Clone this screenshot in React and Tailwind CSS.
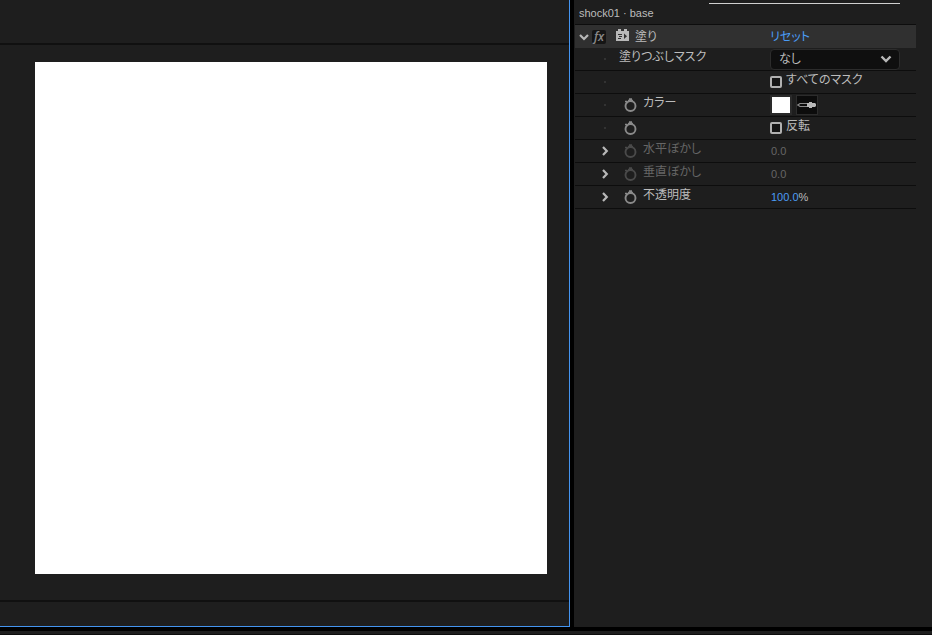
import React, { useState } from 'react';

const Twirl = () => (
  <svg width="8" height="10" viewBox="0 0 8 10" fill="none" stroke="#b8b8b8" strokeWidth="2.2">
    <path d="M2 1l3.8 4L2 9" />
  </svg>
);

const Stopwatch = ({ dim }) => (
  <svg width="13" height="14" viewBox="0 0 13 14" fill="none" stroke={dim ? '#4a4a4a' : '#8a8a8a'}>
    <circle cx="6.5" cy="8" r="5" strokeWidth="1.9" />
    <path d="M5 1h3M4 2.500h5" strokeWidth="1.6" />
    <path d="M1 3.500h2" strokeWidth="1.4" />
  </svg>
);

const PresetIcon = () => (
  <svg width="13" height="12" viewBox="0 0 13 12">
    <path fill="#b8b8b8" d="M0 2h2V0h3v2h3V0h3v2h2v10H0z" />
    <path d="M2 5.500h4M3 7.500h3M2 9.500h3" stroke="#303030" fill="none" />
    <path d="M8 4.500L11 7.200 8 10z" fill="#303030" />
  </svg>
);

const Eyedropper = () => (
  <svg width="20" height="8" viewBox="0 0 20 8">
    <path d="M11 2.500H3L.8 4 3 5.500h8" fill="#0c0c0c" stroke="#8a8a8a" strokeWidth="1.2" />
    <path d="M10 2h2V1h3v1h3l1 1v2l-1 1h-3v1h-3V6h-2z" fill="#b8b8b8" />
  </svg>
);

const CheckField = ({ id, label, checked, onChange }) => (
  <div className="flex items-center gap-1">
    <input
      id={id}
      type="checkbox"
      checked={checked}
      onChange={onChange}
      className="h-3 w-3 appearance-none rounded-xs border-2 border-[#b0b0b0] bg-[#141414] checked:bg-[#4b9cf5]"
    />
    <label htmlFor={id} className="pb-1">{label}</label>
  </div>
);

const Row = ({ name, htmlFor, open, timed, dim, children }) => (
  <div className="grid h-[23px] grid-cols-[195px_1fr] border-b border-[#0d0d0d]">
    <div className="flex items-center pl-[22px]">
      <span className="mr-1.5 flex w-4 justify-center">
        {open ? (
          <button type="button" aria-label={`${name}を展開`}><Twirl /></button>
        ) : (
          <span className="h-0.5 w-0.5 bg-[#333]" />
        )}
      </span>
      {timed && (
        <button type="button" aria-label="ストップウォッチ" className="w-6 pl-[5px]">
          <Stopwatch dim={dim} />
        </button>
      )}
      {name && (
        <label htmlFor={htmlFor} className={dim ? 'pb-1 text-[#666]' : 'pb-1'}>{name}</label>
      )}
    </div>
    <div className="flex items-center">{children}</div>
  </div>
);

const App = () => {
  const [allMasks, setAllMasks] = useState(false);
  const [invert, setInvert] = useState(false);
  const [mask, setMask] = useState('none');

  return (
    <div className="flex min-h-screen flex-col bg-black font-['Liberation_Sans','Noto_Sans_CJK_JP',sans-serif] text-xs leading-4 text-[#bcbcbc] [font-feature-settings:'palt']">
      <main className="flex flex-1 gap-1">
        <section className="flex min-w-0 flex-1 flex-col border-r border-b border-[#4494f0] bg-[#1e1e1e]">
          <div className="h-[43px]" />
          <div className="flex-1 border-y-2 border-[#101010] pt-[17px] pr-[22px] pb-[26px] pl-[35px]">
            <div className="aspect-square w-full bg-white" />
          </div>
          <div className="h-6" />
        </section>

        <aside className="w-[358px] shrink-0 bg-[#1e1e1e] pr-4 pl-px">
          <div className="mr-4 ml-[134px] h-1 border-b border-[#d0d0d0]" />
          <h1 className="h-5 pl-1 text-[11px] leading-[18px]">shock01 · base</h1>

          <div className="grid h-6 grid-cols-[195px_1fr] border-t border-[#0d0d0d] bg-[#303030]">
            <div className="flex items-center pl-1">
              <button type="button" aria-label="塗りを閉じる">
                <svg width="10" height="8" viewBox="0 0 10 8" fill="none" stroke="#b8b8b8" strokeWidth="2.200">
                  <path d="M1 2l4 4 4-4" />
                </svg>
              </button>
              <button type="button" className="ml-[3px] h-[14px] w-[14px] rounded-xs bg-[#151515] font-['Open_Sans',sans-serif] leading-3 font-semibold text-[#8a8a8a] italic">
                fx
              </button>
              <span className="mr-1.5 ml-2.5 pb-1"><PresetIcon /></span>
              <h2>塗り</h2>
            </div>
            <div className="flex items-center">
              <button type="button" className="text-[#4b9cf5]">リセット</button>
            </div>
          </div>

          <Row name="塗りつぶしマスク" htmlFor="mask">
            <div className="relative flex w-[130px] items-center">
              <select
                id="mask"
                value={mask}
                onChange={(e) => setMask(e.target.value)}
                className="h-[21px] w-full appearance-none rounded-sm border border-[#2c2c2c] bg-[#0f0f0f] pl-2"
              >
                <option value="none">なし</option>
              </select>
              <svg className="pointer-events-none absolute right-2" width="12" height="8" viewBox="0 0 12 8" fill="none" stroke="#b8b8b8" strokeWidth="2.400">
                <path d="M1.500 1.500L6 6l4.500-4.500" />
              </svg>
            </div>
          </Row>
          <Row>
            <CheckField id="all-masks" label="すべてのマスク" checked={allMasks} onChange={() => setAllMasks(!allMasks)} />
          </Row>
          <Row name="カラー" htmlFor="color" timed>
            <button id="color" type="button" aria-label="カラー" className="mr-1 h-5 w-[22px] border-2 border-[#2a2a2a] bg-white" />
            <button type="button" aria-label="スポイト" className="flex h-5 w-[22px] items-center border border-[#2c2c2c] bg-[#0c0c0c]">
              <Eyedropper />
            </button>
          </Row>
          <Row timed>
            <CheckField id="invert" label="反転" checked={invert} onChange={() => setInvert(!invert)} />
          </Row>
          <Row name="水平ぼかし" htmlFor="blur-h" open timed dim>
            <button id="blur-h" type="button" className="pl-px text-[11px] text-[#666]">0.0</button>
          </Row>
          <Row name="垂直ぼかし" htmlFor="blur-v" open timed dim>
            <button id="blur-v" type="button" className="pl-px text-[11px] text-[#666]">0.0</button>
          </Row>
          <Row name="不透明度" htmlFor="opacity" open timed>
            <button id="opacity" type="button" className="pl-px text-[11px] text-[#4b9cf5]">
              100.0<span className="text-[#bcbcbc]">%</span>
            </button>
          </Row>
        </aside>
      </main>
      <footer className="mt-1 h-1 border-b border-[#0d0d0d] bg-[#1e1e1e]" />
    </div>
  );
};

export default App;
